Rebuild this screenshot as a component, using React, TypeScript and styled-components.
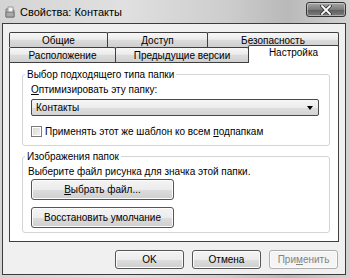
import React from 'react';
import styled, { createGlobalStyle } from 'styled-components';

const GlobalStyle = createGlobalStyle`
  html, body {
    margin: 0;
    padding: 0;
  }
  body {
    font-family: 'Liberation Sans', Arial, sans-serif;
    font-size: 10px;
    color: #000;
    background: #cfcfcf;
  }
`;

const Window = styled.div`
  width: 350px;
  height: 278px;
  box-sizing: border-box;
  display: flex;
  flex-direction: column;
  padding: 0 4px 3px 2px;
  background: linear-gradient(
    90deg,
    #d4d4d4 0%,
    #e0e0e0 35%,
    #cdcdcd 65%,
    #b9b9b9 82%,
    #d2d2d2 100%
  );
`;

const TitleBar = styled.div`
  height: 23px;
  display: flex;
  align-items: flex-start;
  padding-left: 3px;
`;

const TitleIcon = styled.svg`
  margin-top: 6px;
  flex-shrink: 0;
`;

const TitleText = styled.span`
  margin-left: 5px;
  margin-top: 5px;
  font-size: 11px;
  line-height: 14px;
`;

const CloseButton = styled.div`
  margin-left: auto;
  margin-top: 2px;
  width: 40px;
  height: 15px;
  box-sizing: border-box;
  border: 1px solid #333;
  border-radius: 3px;
  background: linear-gradient(#a6a6a6, #7c7c7c 50%, #5c5c5c 51%, #7e7e7e);
  box-shadow: inset 0 0 0 1px rgba(255, 255, 255, 0.4);
  display: flex;
  align-items: center;
  justify-content: center;
`;

const Client = styled.div`
  flex: 1;
  display: flex;
  flex-direction: column;
  background: #f0f0f0;
  border: 1px solid #3c3c3c;
  padding: 8px 6px 0 6px;
`;

const TabRow = styled.div`
  display: flex;
  height: 15px;
`;

const Tab = styled.div<{ $w: number; $active?: boolean }>`
  width: ${(p) => p.$w}px;
  box-sizing: border-box;
  border: 1px solid #3f3f3f;
  border-bottom: none;
  border-radius: 2px 2px 0 0;
  text-align: center;
  flex-shrink: 0;
  & + & {
    margin-left: -1px;
  }
  ${(p) =>
    p.$active
      ? `
    background: #fff;
    height: 18px;
    margin-top: -2px;
    margin-bottom: -1px;
    line-height: 13px;
    position: relative;
    z-index: 1;
  `
      : `
    background: linear-gradient(#f7f7f7, #ebebeb 45%, #dcdcdc 50%, #cfcfcf);
    height: 15px;
    line-height: 15px;
  `}
`;

const Panel = styled.div`
  height: 180px;
  box-sizing: border-box;
  border: 1px solid #3f3f3f;
  background: #fff;
  padding: 5px 8px 0 12px;
`;

const Group = styled.fieldset<{ $gap?: number; $bottom: number }>`
  margin: ${(p) => p.$gap ?? 0}px 0 0 0;
  border: 1px solid #d4d4d4;
  border-radius: 3px;
  padding: 0 10px ${(p) => p.$bottom}px 8px;
  min-width: 0;
`;

const Legend = styled.legend`
  padding: 0 2px;
  margin-left: -6px;
  line-height: 13px;
  font-size: 10px;
`;

const Line = styled.div<{ $top: number; $indent?: number }>`
  margin-top: ${(p) => p.$top}px;
  margin-left: ${(p) => p.$indent ?? 0}px;
  line-height: 13px;
  white-space: nowrap;
`;

const Key = styled.span`
  text-decoration: underline;
`;

const Select = styled.div`
  margin-top: 3px;
  height: 17px;
  box-sizing: border-box;
  border: 1px solid #4a4a4a;
  border-radius: 2px;
  background: linear-gradient(#f6f6f6, #ececec 50%, #dedede 51%, #d4d4d4);
  display: flex;
  align-items: center;
  justify-content: space-between;
  padding: 0 5px 0 4px;
`;

const Arrow = styled.span`
  width: 0;
  height: 0;
  border-left: 3.5px solid transparent;
  border-right: 3.5px solid transparent;
  border-top: 4px solid #000;
`;

const CheckRow = styled.label`
  margin-top: 9px;
  display: flex;
  align-items: center;
  height: 13px;
  white-space: nowrap;
`;

const CheckBox = styled.span`
  width: 11px;
  height: 11px;
  box-sizing: border-box;
  border: 1px solid #7a7a7a;
  background: linear-gradient(135deg, #d6d6d6, #f4f4f4);
  box-shadow: inset 0 0 0 1px #fff;
  margin-right: 3px;
  flex-shrink: 0;
`;

const Button = styled.div<{ $w: number; $h?: number; $top?: number; $disabled?: boolean }>`
  width: ${(p) => p.$w}px;
  height: ${(p) => p.$h ?? 20}px;
  margin-top: ${(p) => p.$top ?? 0}px;
  box-sizing: border-box;
  border: 1px solid ${(p) => (p.$disabled ? '#adadad' : '#555')};
  border-radius: 3px;
  background: ${(p) =>
    p.$disabled
      ? '#f4f4f4'
      : 'linear-gradient(#f4f4f4, #ececec 50%, #dddddd 51%, #cfcfcf)'};
  box-shadow: inset 0 0 0 1px #fcfcfc;
  color: ${(p) => (p.$disabled ? '#838383' : '#000')};
  display: flex;
  align-items: center;
  justify-content: center;
  white-space: nowrap;
`;

const Footer = styled.div`
  display: flex;
  justify-content: flex-end;
  gap: 8px;
  margin-top: 8px;
  padding-right: 1px;
`;

const FolderIcon = () => (
  <TitleIcon width="10" height="12" viewBox="0 0 10 12">
    <path d="M1 3 L4 3 L5 4 L9 4 L9 11 L1 11 Z" fill="#c9c9c9" stroke="#7a7a7a" strokeWidth="1" />
    <rect x="3" y="1" width="5" height="6" fill="#f4f4f4" stroke="#8a8a8a" strokeWidth="0.8" />
    <path d="M1 6 L9 6 L9 11 L1 11 Z" fill="#a9a9a9" stroke="#6a6a6a" strokeWidth="0.8" />
  </TitleIcon>
);

const CloseGlyph = () => (
  <svg width="12" height="10" viewBox="0 0 12 10">
    <path d="M2 1 L10 9 M10 1 L2 9" stroke="#333" strokeWidth="3.4" strokeLinecap="square" />
    <path d="M2 1 L10 9 M10 1 L2 9" stroke="#fff" strokeWidth="1.8" strokeLinecap="square" />
  </svg>
);

const App = () => {
  return (
    <>
      <GlobalStyle />
      <Window>
        <TitleBar>
          <FolderIcon />
          <TitleText>Свойства: Контакты</TitleText>
          <CloseButton>
            <CloseGlyph />
          </CloseButton>
        </TitleBar>
        <Client>
          <TabRow>
            <Tab $w={99}>Общие</Tab>
            <Tab $w={101}>Доступ</Tab>
            <Tab $w={132}>Безопасность</Tab>
          </TabRow>
          <TabRow>
            <Tab $w={107}>Расположение</Tab>
            <Tab $w={134}>Предыдущие версии</Tab>
            <Tab $w={91} $active>
              Настройка
            </Tab>
          </TabRow>
          <Panel>
            <Group $bottom={7}>
              <Legend>Выбор подходящего типа папки</Legend>
              <Line $top={2}>
                <Key>О</Key>птимизировать эту папку:
              </Line>
              <Select>
                <span>Контакты</span>
                <Arrow />
              </Select>
              <CheckRow>
                <CheckBox />
                <span>
                  Применять этот же шаблон ко всем <Key>п</Key>одпапкам
                </span>
              </CheckRow>
            </Group>
            <Group $gap={4} $bottom={4}>
              <Legend>Изображения папок</Legend>
              <Line $top={2} $indent={-3}>
                Выберите файл рисунка для значка этой папки.
              </Line>
              <Button $w={143} $h={21} $top={1}>
                <span>
                  <Key>В</Key>ыбрать файл...
                </span>
              </Button>
              <Button $w={143} $h={21} $top={7}>
                Восстановить умолчание
              </Button>
            </Group>
          </Panel>
          <Footer>
            <Button $w={69} $h={19}>
              OK
            </Button>
            <Button $w={69} $h={19}>
              Отмена
            </Button>
            <Button $w={69} $h={19} $disabled>
              <span>
                При<Key>м</Key>енить
              </span>
            </Button>
          </Footer>
        </Client>
      </Window>
    </>
  );
};

export default App;
